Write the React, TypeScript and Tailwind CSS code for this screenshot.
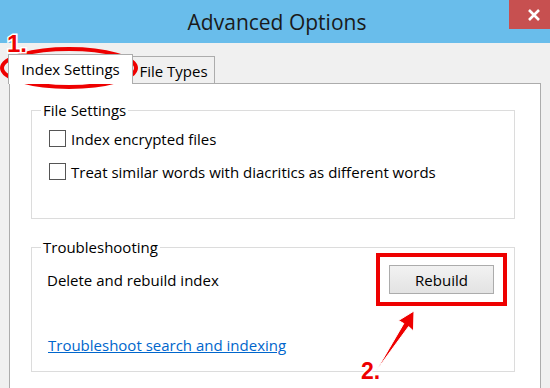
import React from "react";

const font = { fontFamily: '"Open Sans", "Noto Sans", Arial, sans-serif' };

function Checkbox({ label }: { label: string }) {
  return (
    <div className="flex h-[17px] items-center gap-[5px]">
      <div className="h-[17px] w-[17px] border border-[#555555] bg-white" />
      <span className="text-[15px] leading-[18px] text-black">{label}</span>
    </div>
  );
}

export default function App() {
  return (
    <div className="relative h-[388px] w-[550px] overflow-hidden bg-[#f0f0f0]" style={font}>
      {/* Title bar */}
      <div className="relative flex h-[43px] items-center justify-center bg-[#69bdeb]">
        <span className="pl-[4px] text-[21px] leading-[26px] text-[#1a1a1a]">Advanced Options</span>
        <div className="absolute right-0 top-0 flex h-[29px] w-[41px] items-center justify-center bg-[#c75050]">
          <svg width="14" height="12" viewBox="0 0 14 12" className="ml-[8px]">
            <path d="M2 1 L12 11 M12 1 L2 11" stroke="white" strokeWidth="2.6" />
          </svg>
        </div>
      </div>

      {/* Tabs */}
      <div className="ml-[8px] mt-[11px] flex items-end">
        <div className="relative z-10 -mb-px flex h-[30px] w-[125px] items-start justify-center border-x border-t border-[#acacac] bg-white pt-[5px] text-[15px] leading-[18px] text-black">
          Index Settings
        </div>
        <div className="flex h-[27px] w-[82px] items-start justify-center border-r border-t border-[#acacac] bg-[#f0f0f0] pt-[5px] text-[15px] leading-[18px] text-black">
          File Types
        </div>
      </div>

      {/* Panel */}
      <div className="ml-[9px] h-[320px] w-[532px] border border-[#acacac] bg-white pl-[21px] pt-[17px]">
        <fieldset className="h-[118px] w-[484px] border border-[#dcdcdc] p-0">
          <legend className="ml-[9px] px-[2px] text-[15px] leading-[18px] text-black">File Settings</legend>
          <div className="flex flex-col gap-[16px] pl-[17px] pt-[11px]">
            <Checkbox label="Index encrypted files" />
            <Checkbox label="Treat similar words with diacritics as different words" />
          </div>
        </fieldset>

        <fieldset className="mt-[19px] h-[134px] w-[484px] border border-[#dcdcdc] p-0">
          <legend className="ml-[9px] px-[2px] text-[15px] leading-[18px] text-black">Troubleshooting</legend>
          <div className="mt-[9px] flex h-[29px] items-center justify-between pl-[15px] pr-[20px]">
            <span className="text-[15px] leading-[18px] text-black">Delete and rebuild index</span>
            <button className="flex h-[29px] w-[105px] items-center justify-center border border-[#acacac] bg-gradient-to-b from-[#f2f2f2] to-[#e3e3e3] text-[15px] leading-[18px] text-black">
              Rebuild
            </button>
          </div>
          <div className="mt-[39px] pl-[16px]">
            <a className="text-[15px] leading-[18px] text-[#0066cc] underline">Troubleshoot search and indexing</a>
          </div>
        </fieldset>
      </div>

      {/* Annotations overlay */}
      <svg className="pointer-events-none absolute left-0 top-0" width="550" height="388" viewBox="0 0 550 388">
        <ellipse cx="69" cy="68" rx="67" ry="19" fill="none" stroke="#ee0000" strokeWidth="4" />
        <rect x="378" y="255" width="127" height="49" fill="none" stroke="#ee0000" strokeWidth="4" />
        <polygon
          points="414,311 398.5,320.5 403.8,323.5 376,371 408.6,326.5 413.5,331"
          fill="#ee0000"
          stroke="#ffffff"
          strokeWidth="1"
          strokeLinejoin="round"
        />
        <text
          x="7"
          y="52"
          fontFamily='"Liberation Sans", Arial, sans-serif'
          fontWeight="bold"
          fontSize="24"
          fill="#ee0000"
          stroke="#ffffff"
          strokeWidth="3"
          paintOrder="stroke"
        >
          1.
        </text>
        <text
          x="361"
          y="379"
          fontFamily='"Liberation Sans", Arial, sans-serif'
          fontWeight="bold"
          fontSize="23"
          fill="#ee0000"
          stroke="#ffffff"
          strokeWidth="3"
          paintOrder="stroke"
        >
          2.
        </text>
      </svg>
    </div>
  );
}
